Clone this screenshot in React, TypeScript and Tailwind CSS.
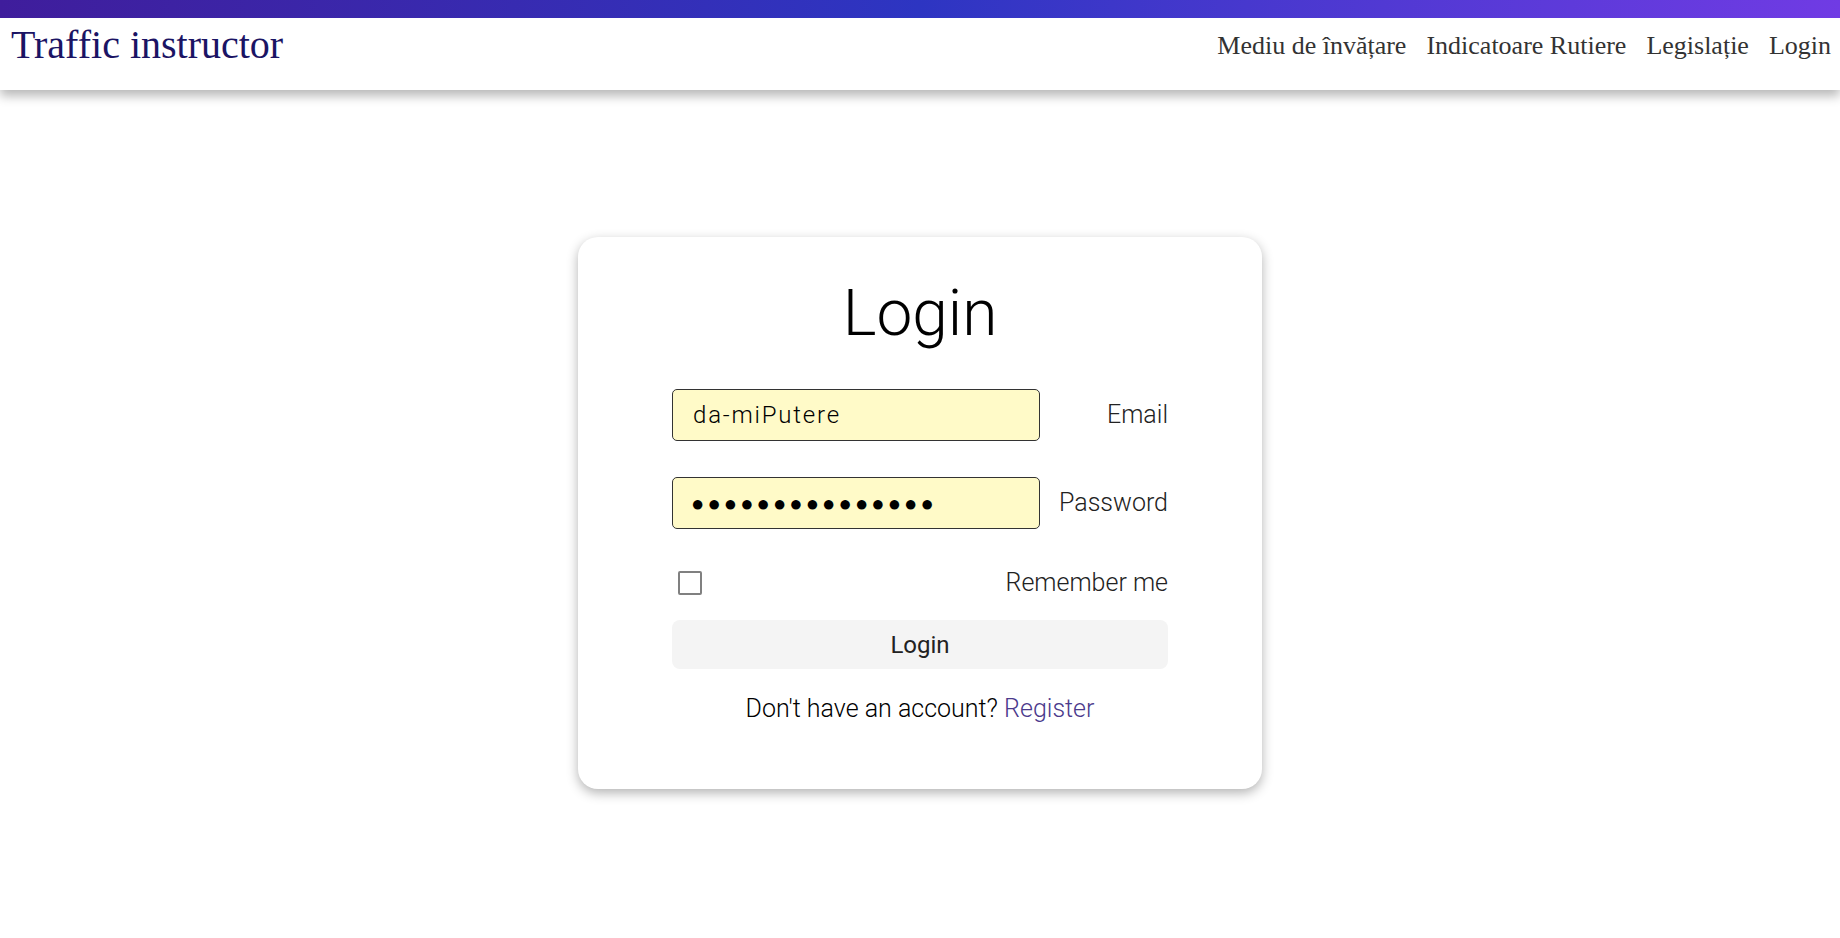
import React from "react";

export default function App() {
  return (
    <div className="min-h-screen bg-white">
      <header className="relative z-10 bg-white shadow-[0_6px_10px_rgba(0,0,0,0.28)]">
        <div className="h-[18px] bg-gradient-to-r from-[#3f1d9c] via-[#2d35c2] to-[#703be4]" />
        <div className="h-[72px] flex items-start justify-between pl-[11px] pr-[9px] pt-[4px]">
          <div className="font-['Liberation_Serif',serif] text-[40px] leading-[46px] text-[#1b1464]">
            Traffic instructor
          </div>
          <nav className="flex gap-[20px] pt-[8px] font-['Liberation_Serif',serif] text-[26px] leading-[32px] text-[#333333]">
            <span>Mediu de învățare</span>
            <span>Indicatoare Rutiere</span>
            <span>Legislație</span>
            <span>Login</span>
          </nav>
        </div>
      </header>
      <main className="flex justify-center pt-[147px]">
        <div className="w-[684px] h-[552px] rounded-[20px] bg-white shadow-[0_4px_12px_rgba(0,0,0,0.3)] px-[94px] pt-[45px] font-['Roboto',sans-serif]">
          <h1 className="text-center text-[64px] leading-[64px] font-light text-black">Login</h1>
          <div className="mt-[43px] flex items-center justify-between">
            <div className="w-[368px] h-[52px] rounded-[5px] border border-[#333] bg-[#fffac8] flex items-center px-[20px] text-[24px] tracking-[1.8px] font-light text-black">
              da-miPutere
            </div>
            <span className="text-[25px] font-light text-[#222]">Email</span>
          </div>
          <div className="mt-[36px] flex items-center justify-between">
            <div className="w-[368px] h-[52px] rounded-[5px] border border-[#333] bg-[#fffac8] flex items-center px-[18px] text-[22px] tracking-[3.1px] text-black">
              ●●●●●●●●●●●●●●●
            </div>
            <span className="text-[25px] font-light text-[#222]">Password</span>
          </div>
          <div className="mt-[41px] h-[26px] flex items-center justify-between">
            <div className="ml-[6px] w-[24px] h-[24px] rounded-[2px] border-2 border-[#808080] bg-white" />
            <span className="text-[25px] font-light text-[#222]">Remember me</span>
          </div>
          <button className="mt-[24px] w-full h-[49px] rounded-[8px] bg-[#f4f4f4] font-['Roboto',sans-serif] text-[24px] text-[#222]">
            Login
          </button>
          <p className="mt-[26px] text-center text-[25px] leading-[28px] font-light text-black">
            Don't have an account? <span className="text-[#4b3a8c]">Register</span>
          </p>
        </div>
      </main>
    </div>
  );
}
